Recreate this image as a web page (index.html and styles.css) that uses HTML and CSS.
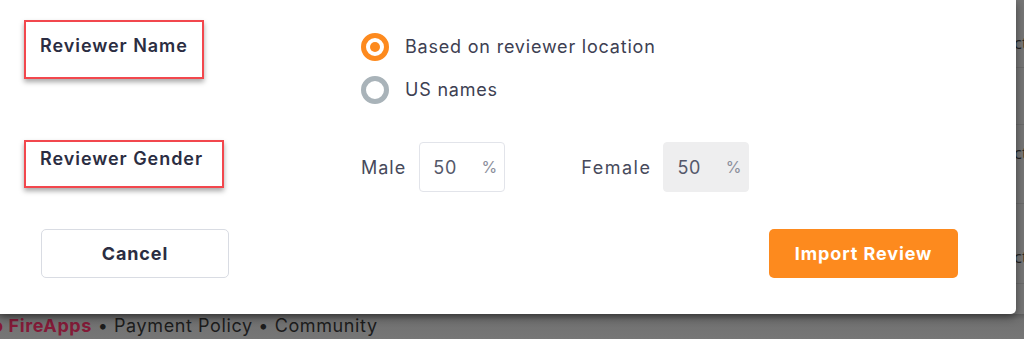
FILE: index.html
```html
<!DOCTYPE html>
<html lang="en">
<head>
<meta charset="utf-8">
<title>Import Review</title>
<link rel="stylesheet" href="styles.css">
</head>
<body>
<div class="page">
  <div class="rows">
    <div class="row row-1"><span class="cell">Product</span></div>
    <div class="row row-2"></div>
    <div class="row row-3"><span class="cell">Product</span></div>
    <div class="row row-4"><span class="cell">Product</span></div>
  </div>
  <div class="site-footer">
    <span class="brand">o FireApps</span> • Payment Policy • Community
  </div>
</div>

<div class="modal">
  <div class="form-grid">
    <div class="label-box label-name"><span class="label">Reviewer Name</span></div>
    <div class="radios">
      <label class="radio-item">
        <span class="radio checked"></span>
        <span class="radio-text">Based on reviewer location</span>
      </label>
      <label class="radio-item">
        <span class="radio"></span>
        <span class="radio-text">US names</span>
      </label>
    </div>

    <div class="label-box label-gender"><span class="label">Reviewer Gender</span></div>
    <div class="gender">
      <span class="g-label">Male</span>
      <div class="pct-input"><span class="val">50</span><span class="pct">%</span></div>
      <span class="g-label female">Female</span>
      <div class="pct-input disabled"><span class="val">50</span><span class="pct">%</span></div>
    </div>
  </div>

  <div class="actions">
    <button class="btn btn-cancel">Cancel</button>
    <button class="btn btn-import">Import Review</button>
  </div>
</div>
</body>
</html>
```

FILE: styles.css
```css
* { box-sizing: border-box; }
html, body { margin: 0; padding: 0; }
body {
  width: 1024px;
  height: 339px;
  overflow: hidden;
  background: #767676;
  font-family: Inter, "Open Sans", sans-serif;
  position: relative;
}

.page {
  height: 339px;
  display: flex;
  flex-direction: column;
  justify-content: space-between;
}
.rows {
  display: flex;
  flex-direction: column;
  align-items: flex-end;
}
.row {
  width: 200px;
  border-bottom: 1px solid #6b6b6b;
  margin-right: -4px;
  line-height: 20px;
}
.row-1 { height: 68px; padding-top: 33px; }
.row-2 { height: 57px; }
.row-3 { height: 79px; padding-top: 18px; }
.row-4 { height: 80px; padding-top: 43px; }
.cell {
  display: block;
  text-align: right;
  color: #222;
  font-family: "Open Sans", sans-serif;
  font-size: 17px;
}
.site-footer {
  height: 25px;
  margin-left: -8px;
  font-size: 18px;
  letter-spacing: 0.6px;
  color: #1c1c1c;
  line-height: 24px;
  white-space: nowrap;
  background: linear-gradient(#5e5e5e, #717171 6px, #767676);
}
.brand { color: #831b38; font-weight: 700; }

.modal {
  position: absolute;
  left: 0;
  top: 0;
  width: 1016px;
  height: 314px;
  background: #fff;
  border-bottom-right-radius: 5px;
  box-shadow: 0 3px 10px rgba(0, 0, 0, 0.45);
  padding: 20px 24px;
}

.form-grid {
  display: grid;
  grid-template-columns: 337px 1fr;
  row-gap: 37px;
  align-items: start;
}

.label-box {
  border: 2px solid #f2474d;
  box-shadow: 0 3px 5px rgba(0, 0, 0, 0.35);
  padding-left: 14px;
}
.label-name { width: 180px; height: 59px; padding-top: 13px; }
.label-gender { width: 200px; height: 48px; padding-top: 6px; }
.label {
  font-size: 18px;
  font-weight: 600;
  color: #2b2d42;
  letter-spacing: 0.95px;
}

.radios {
  padding-top: 13px;
  display: flex;
  flex-direction: column;
  gap: 16px;
}
.radio-item {
  display: flex;
  align-items: center;
  gap: 16px;
  height: 27px;
}
.radio {
  width: 28px;
  height: 28px;
  border-radius: 50%;
  border: 5px solid #a9b3b9;
  display: flex;
  align-items: center;
  justify-content: center;
}
.radio.checked { border-color: #fd8a1e; }
.radio.checked::after {
  content: "";
  width: 10px;
  height: 10px;
  border-radius: 50%;
  background: #fd8a1e;
}
.radio-text {
  font-size: 18px;
  color: #3d4052;
  letter-spacing: 0.8px;
}

.gender {
  margin-top: 2px;
  display: flex;
  align-items: center;
}
.g-label {
  font-size: 18px;
  color: #474a5b;
  letter-spacing: 1px;
  margin-right: 13px;
}
.g-label.female { margin-left: 76px; margin-right: 12px; letter-spacing: 1.5px; }
.pct-input {
  width: 86px;
  height: 50px;
  border: 1px solid #e2e4ea;
  border-radius: 4px;
  display: flex;
  align-items: center;
  justify-content: space-between;
  padding: 0 7px 0 13px;
}
.pct-input.disabled { background: #eeeeef; border-color: #eeeeef; }
.val { font-size: 18px; color: #55586a; letter-spacing: 0.8px; }
.pct { font-size: 16px; color: #8b8e9b; }

.actions {
  margin-top: 37px;
  display: flex;
  justify-content: space-between;
  padding: 0 34px 0 17px;
}
.btn {
  font-family: Inter, "Open Sans", sans-serif;
  font-size: 18px;
  font-weight: 700;
  letter-spacing: 0.9px;
  height: 49px;
  border-radius: 5px;
  cursor: pointer;
}
.btn-cancel {
  width: 188px;
  background: #fff;
  border: 1px solid #d9dce3;
  color: #2b2d42;
}
.btn-import {
  width: 189px;
  background: #fd8a1e;
  border: none;
  color: #fff;
}
```
